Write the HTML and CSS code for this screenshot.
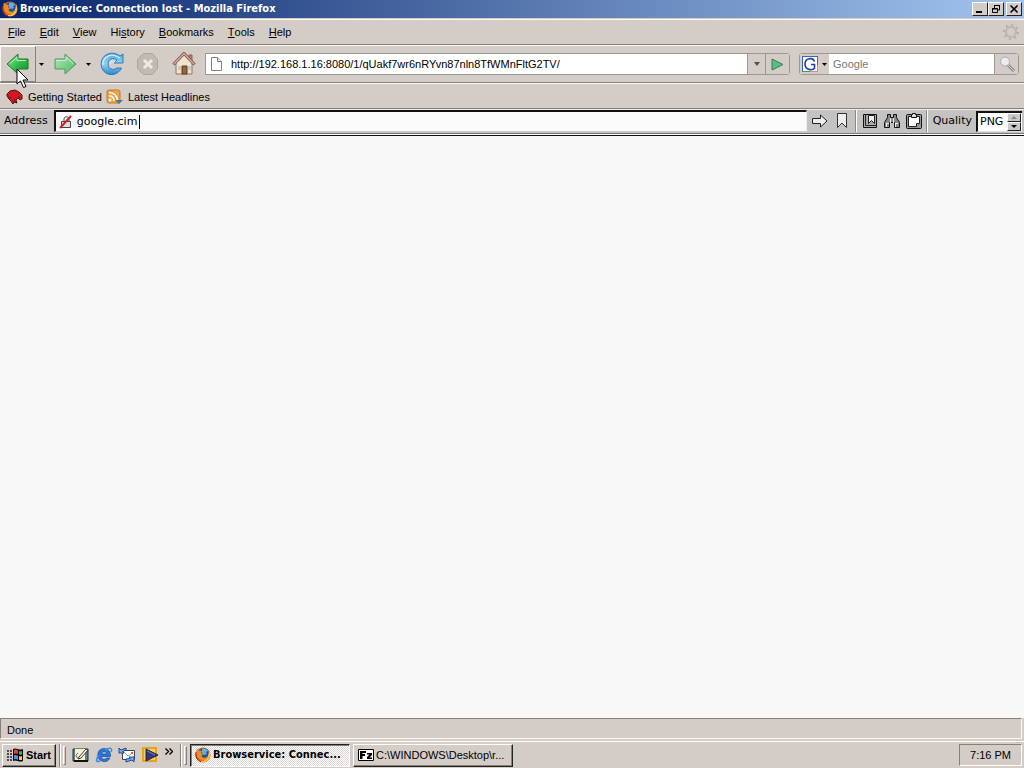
FILE: index.html
```html
<!DOCTYPE html>
<html lang="en">
<head>
<meta charset="utf-8">
<title>Browservice: Connection lost - Mozilla Firefox</title>
<link rel="stylesheet" href="styles.css">
</head>
<body>
<svg class="defs" width="0" height="0" aria-hidden="true">
  <defs>
    <linearGradient id="green" x1="0" y1="0" x2="1" y2="1"><stop offset="0" stop-color="#9be89b"/><stop offset=".55" stop-color="#2fb84a"/><stop offset="1" stop-color="#16932e"/></linearGradient>
    <linearGradient id="pale" x1="0" y1="0" x2="1" y2="1"><stop offset="0" stop-color="#b5e6b4"/><stop offset="1" stop-color="#4dbb68"/></linearGradient>
    <linearGradient id="blue" x1="0" y1="0" x2="0" y2="1"><stop offset="0" stop-color="#5aa5dc"/><stop offset=".5" stop-color="#8fd4f2"/><stop offset="1" stop-color="#2c86c8"/></linearGradient>
    <symbol id="firefox" viewBox="0 0 16 16">
      <circle cx="8" cy="8" r="7.6" fill="#d9601a"/>
      <circle cx="8.6" cy="6.6" r="5.4" fill="#23549b"/>
      <path d="M7 2c3-1 5 0 6 2l-2 1 1 2-3 1-2-2z" fill="#5fb3d8"/>
      <path d="M2 1.500 4 3.500 7 4 6 6.200 8.500 7 6.500 8.800c.8 2.700 4.500 2.500 6 .4C12 12 10 13.500 7 13 2.500 12.500.5 7 2 1.500z" fill="#f08a24"/>
      <path d="M14 3c2 4 1.500 8.500-2 11-3 2-7 1.500-9-1 4 2 8 .5 9.500-3C13.500 7.500 14 5 14 3z" fill="#f7c244"/>
      <path d="M1 5c-.8 4 1 8.500 5 9.800" stroke="#8d2c10" fill="none"/>
    </symbol>
  </defs>
</svg>

<header class="titlebar">
  <svg class="icon16"><use href="#firefox"/></svg>
  <h1>Browservice: Connection lost - Mozilla Firefox</h1>
  <div class="winbuttons">
    <button aria-label="Minimize"><svg width="12" height="10"><path d="M2 8h6" stroke="#000" stroke-width="2"/></svg></button>
    <button aria-label="Restore"><svg width="12" height="10" fill="none" stroke="#000"><path d="M4 1.500h6M4.500 1v3M9.500 1v5H7M2 4.500h5.500v4h-5v-4M2 5h6"/></svg></button>
    <button class="close" aria-label="Close"><svg width="12" height="10"><path d="m2.500 1.500 7 7m0-7-7 7" stroke="#000" stroke-width="1.600"/></svg></button>
  </div>
</header>

<nav class="menubar" aria-label="Menu">
  <button><u>F</u>ile</button><button><u>E</u>dit</button><button><u>V</u>iew</button><button>Hi<u>s</u>tory</button><button><u>B</u>ookmarks</button><button><u>T</u>ools</button><button><u>H</u>elp</button>
  <svg class="throbber" width="16" height="16"><circle cx="8" cy="8" r="5" fill="none" stroke="#bcb6b0" stroke-width="2"/><circle cx="8" cy="8" r="7" fill="none" stroke="#b4aea8" stroke-width="2" stroke-dasharray="2 3.500"/></svg>
</nav>

<div class="navbar">
  <button class="back" aria-label="Back"><svg width="24" height="24"><path d="M1 12 12 2v5h10v10H12v5z" fill="url(#green)" stroke="#197a2c"/><path d="m4 11.500 7-6V8.500h9" fill="none" stroke="#b9f2b5"/></svg>
    <svg class="pointer" width="13" height="21" aria-hidden="true"><path d="M1 1v15l3.500-3 3 6.500 2.500-1-3-6.500h5z" fill="#fff" stroke="#000"/></svg></button>
  <button class="drop" aria-label="Back history"><svg width="5" height="3"><path d="M0 0h5L2.500 3z"/></svg></button>
  <button class="tool" aria-label="Forward"><svg width="24" height="24"><path d="M23 12 12 2v5H2v10h10v5z" fill="url(#pale)" stroke="#4c9c5c"/><path d="M3 8.500h10V5l7 6.500" fill="none" stroke="#d0f0cd"/></svg></button>
  <button class="drop" aria-label="Forward history"><svg width="5" height="3"><path d="M0 0h5L2.500 3z"/></svg></button>
  <button class="tool" aria-label="Reload"><svg width="24" height="24"><path d="M23 2v9h-9l3-3c-4-3-9-1-9 4 0 5 5 7 9 4h4.500C18 23 11 24 6 21-1 17 0 6 6 3c5-3 10-2 14 1z" fill="url(#blue)" stroke="#2a79bd"/><path d="M3 13C2 7 9 1 16 4l4 2M10 12c0-2 3-3 5-2" fill="none" stroke="#cceefa" stroke-width="1.300"/></svg></button>
  <button class="tool" aria-label="Stop" disabled><svg width="24" height="24"><path d="M7.500 1.500h9l5 6v9l-5 6h-9l-6-6v-9z" fill="#bcbcb1" stroke="#a8a89e"/><path d="m8 8 8 8m0-8-8 8" stroke="#eeeae3" stroke-width="3"/></svg></button>
  <button class="tool" aria-label="Home"><svg width="24" height="24"><path d="M4 11v11h16V11l-8-8z" fill="#f0e3cd" stroke="#8d7660"/><path d="M17 3h3v6l-3-2z" fill="#bb8575" stroke="#765"/><path d="m1.500 12.500 10.500-11 10.500 11" fill="none" stroke="#7c5348" stroke-width="3"/><path d="m2 12 10-10.500L22 12" fill="none" stroke="#d6aca0" stroke-width="1.500"/><path d="M10 14h5v8h-5z" fill="#9c6239" stroke="#623b28"/><path d="M6 14h3v4H6zM16 14h3v4h-3z" fill="#c7ccc6"/></svg></button>
  <div class="urlbox">
    <svg width="12" height="14"><path d="M1.500.5h6l4 4v9h-10z" fill="#fff" stroke="#7a828e"/><path d="M7.500.5v4h4" fill="#dde3ee" stroke="#7a828e"/></svg>
    <input type="text" aria-label="Location" value="http://192.168.1.16:8080/1/qUakf7wr6nRYvn87nln8TfWMnFltG2TV/">
    <button class="seg" aria-label="Show history"><svg width="6" height="4"><path d="M0 0h6L3 4z" fill="#554f4a"/></svg></button>
    <button class="seg go" aria-label="Go"><svg width="13" height="13"><path d="M1 1v11l11-5.500z" fill="#62b985" stroke="#2d8054"/></svg></button>
  </div>
  <div class="searchbox">
    <button class="engine" aria-label="Search engine"><svg width="16" height="16"><path d="M0 0h16v16H0z" fill="#fff"/><path d="M0 16V0h16" fill="none" stroke="#3963bd" stroke-width="2"/><path d="M16 0v9" stroke="#d33" stroke-width="2"/><path d="M16 9v7H8" fill="none" stroke="#d98c84" stroke-width="2"/><path d="M0 16h8" stroke="#3b9c54" stroke-width="2"/><path d="M12.500 5.500C11 1 3 2 3 8s7.500 7 9.500 4V8.500H9" fill="none" stroke="#1c3faa" stroke-width="1.600"/></svg><svg width="5" height="3"><path d="M0 0h5L2.500 3z"/></svg></button>
    <input type="text" aria-label="Search" placeholder="Google">
    <button class="seg search" aria-label="Search"><svg width="18" height="16"><path d="m10 9 6 6" stroke="#858585" stroke-width="3"/><path d="m10 9 6 6" stroke="#ddd"/><circle cx="7" cy="5.500" r="4.500" fill="#e9edf0" stroke="#aaa"/></svg></button>
  </div>
</div>

<nav class="bookmarks" aria-label="Bookmarks">
  <a href="#"><svg width="17" height="16"><path d="M1 5 4 2l5-1 4 2 3 3v4l-2 1-2-2-2 2 1 3-3-1-1 2-2-3-2-2-2-3z" fill="#d31822" stroke="#5a1010"/><path d="m12 7 2 2M2 8l3 1m3 1 1 3" fill="none" stroke="#721018"/></svg>Getting Started</a>
  <a href="#"><svg width="17" height="16"><rect x="1" y="1" width="13" height="13" rx="2" fill="#eda247" stroke="#c87b20"/><circle cx="4" cy="11" r="1.500" fill="#fff"/><path d="M3 7c3 0 5 2 5 5M3 3.500c5 0 8.500 3.500 8.500 8.500" fill="none" stroke="#fff" stroke-width="1.600"/><path d="M9 11h8l-4 4z" fill="#5b7388"/></svg>Latest Headlines</a>
</nav>

<main class="page">
  <div class="addressbar">
    <label for="addr">Address</label>
    <div class="field">
      <svg width="14" height="14"><path d="M2.500 6.500h9v6h-9z" fill="#ddd" stroke="#444"/><path d="M5 6V4c0-3 5-3 5 0v2" fill="none" stroke="#444"/><path d="M1 13 12 1" stroke="#c8202c" stroke-width="2"/></svg>
      <span class="typed"><input id="addr" type="text" value="google.cim" size="10"><i class="caret"></i></span>
    </div>
    <div class="group first">
      <button aria-label="Go"><svg width="16" height="14"><path d="M.5 4.500h8V1l6.500 6-6.500 6V9.500h-8z" fill="#eee" stroke="#222"/></svg></button>
      <button aria-label="Bookmark"><svg width="12" height="16"><path d="M1.500.5h9v14L6 10l-4.500 4.500z" fill="#eee" stroke="#333"/></svg></button>
    </div>
    <div class="group">
      <button aria-label="Bookmarks"><svg width="16" height="16"><path d="M1.500 1.500h13v13h-13z" fill="#aaa" stroke="#111"/><path d="M3.500 2v10.500H14" fill="none" stroke="#222"/><path d="M6.500 2.500h6v8l-3-3-3 3z" fill="#eee" stroke="#222"/></svg></button>
      <button aria-label="Find"><svg width="16" height="16"><path d="M3.500 1.500h3v3h3v-3h3v3l3 5v5h-5v-5h-5v5h-5v-5l3-5z" fill="#888" stroke="#111"/><path d="M6.500 5v5m3-5v5M2 10.500h3m6 0h3M2.500 11v3m9-3v3" stroke="#eee"/></svg></button>
      <button aria-label="Clipboard"><svg width="16" height="16"><rect x=".5" y="1.500" width="15" height="14" rx="1" fill="#999" stroke="#111"/><path d="M2.500 3.500h11v7l-3 3h-8z" fill="#fff" stroke="#222"/><path d="M13.500 10.500h-3v3" fill="#ccc" stroke="#222"/><path d="M5.500 1.500h1v-1h3v1h1v3h-5z" fill="#ddd" stroke="#111"/></svg></button>
    </div>
    <div class="group quality">
      <label for="quality">Quality</label>
      <div class="spinner"><input id="quality" type="text" value="PNG"><span><button aria-label="Previous"><svg width="6" height="3"><path d="M0 3h6L3 0z" fill="#888"/></svg></button><button aria-label="Next"><svg width="6" height="3"><path d="M0 0h6L3 3z"/></svg></button></span></div>
    </div>
  </div>
</main>

<div class="status" role="status">Done</div>

<footer class="taskbar">
  <button class="start"><svg width="17" height="16"><path d="M0 4h2m1 0h2M0 7h2m1 0h2M0 10h2m1 0h2M0 13h2m1 0h2" stroke="#222" stroke-width="1.500"/><path d="M6 2c3-2 6 2 10 0v12c-4 2-7-2-10 0z"/><path d="M7 3c1.500-1 3 0 4 .5V7C9.500 6.500 8 6 7 7z" fill="#e83c36"/><path d="M12 4c1 .3 2 .3 3 0v3.500c-1 .5-2 .3-3 0z" fill="#37b64a"/><path d="M7 8.500c1-1 3 0 4 .3v4C10 12 8 12 7 12.500z" fill="#5d86ea"/><path d="M12 9.300c1 .2 2 .3 3-.3v3.700c-1 .5-2 .3-3 0z" fill="#efd33c"/></svg>Start</button>
  <i class="sep"></i><i class="grip"></i>
  <div class="quick">
    <button aria-label="Show Desktop"><svg width="18" height="16"><path d="M1 2h15v12H1z" fill="#57848c" stroke="#234"/><path d="M3 2h10v11H3z" fill="#f5f1c8"/><path d="M2 14h14" stroke="#111" stroke-width="2"/><path d="m7 10 7-8 2 1-7 8-3 1z" fill="#fff" stroke="#333"/><path d="M6 6c-3 2-2 5 1 5" fill="none" stroke="#555"/></svg></button>
    <button aria-label="Internet Explorer"><svg width="18" height="16"><path d="M9 1.500a6.500 6.500 0 1 0 6 9.500h-3.500c-1.500 2-5 1.500-5-1.500h9C16 5 13 1.500 9 1.500zM6.500 7c.5-3 5-3 5 0z" fill="#2c74d8" fill-rule="evenodd" stroke="#164ca5" stroke-width=".7"/><path d="M4 8c-3 4-4 8 1 6M10 3c5-3 8-2 6 2" fill="none" stroke="#3c8aee" stroke-width="1.500"/></svg></button>
    <button aria-label="Outlook Express"><svg width="18" height="16"><path d="M4.500 3.500h12v9h-12z" fill="#fff" stroke="#444"/><path d="M13 5h2v2h-2z" fill="#d55"/><path d="m5 4 5 5 3-2" fill="none" stroke="#999"/><path d="M1 1v5h5L4.500 4.500 8 3V1L3 3zM16 15v-5h-5l1.500 1.500L8 12v3l6-2z" fill="#6dbaf2" stroke="#1d4791"/></svg></button>
    <button aria-label="Media Player"><svg width="18" height="16"><path d="M2 1h13v13H2z" fill="#f8d268" stroke="#e9a21c" stroke-width="2"/><path d="M5 2v12l12-6z" fill="#31397c" stroke="#1b2257"/><path d="m6 4 8 4" stroke="#7c83bb"/></svg></button>
    <button class="more" aria-label="More"><svg width="8" height="7" fill="none" stroke="#000" stroke-width="1.400"><path d="m.5.500 3 3-3 3m4-6 3 3-3 3"/></svg></button>
  </div>
  <i class="sep"></i><i class="grip"></i>
  <button class="task active"><svg class="icon16"><use href="#firefox"/></svg><span>Browservice: Connec...</span></button>
  <button class="task"><svg width="16" height="12"><path d="M.5.500h15v11H.5z" fill="#fff" stroke="#000"/><path d="M2 2h6v2H4.500v1H7v2H4.500v3H2zM9 4h5v2l-2.500 2.500H14V10H9V8l2.500-2.500H9z"/></svg><span>C:\WINDOWS\Desktop\r...</span></button>
  <time class="clock">7:16 PM</time>
</footer>
</body>
</html>
```
FILE: styles.css
```css
:root {
  --face: #d4ccc6;
  --shade: #858079;
  --light: #fbf8f5;
}
* { box-sizing: border-box; }
body {
  margin: 0;
  min-height: 100vh;
  display: flex;
  flex-direction: column;
  background: var(--face);
  color: #000;
  font: 11px/14px "Liberation Sans", Arial, sans-serif;
}
button, input { font: inherit; color: inherit; margin: 0; padding: 0; border: 0; background: none; border-radius: 0; }
button { display: flex; align-items: center; justify-content: center; flex: none; }
input { min-width: 0; outline: 0; }
svg { display: block; flex: none; }
.defs { position: absolute; }
.icon16 { width: 16px; height: 16px; }

.titlebar {
  display: flex;
  align-items: center;
  height: 18px;
  padding: 0 2px;
  background: linear-gradient(to right, #08256b, #a2c5ef);
  color: #fff;
}
.titlebar h1 { flex: 1; margin: 0 0 0 2px; font: bold 11px/16px "DejaVu Sans Condensed", "DejaVu Sans", sans-serif; }
.winbuttons { display: flex; }
.winbuttons button {
  width: 16px;
  height: 14px;
  background: var(--face);
  border: 1px solid;
  border-color: #fff #222 #222 #fff;
}
.winbuttons .close { margin-left: 2px; }

.menubar {
  display: flex;
  align-items: center;
  height: 26px;
  margin-top: 1px;
  padding-left: 1px;
  border-top: 1px solid var(--light);
  border-bottom: 1px solid var(--shade);
}
.menubar button { padding: 0 7px; }
.throbber { margin: 0 5px 0 auto; }

.navbar {
  display: flex;
  align-items: center;
  height: 38px;
  border-top: 1px solid var(--light);
  border-bottom: 1px solid var(--shade);
}
.back { position: relative; width: 36px; height: 36px; border: 1px solid; border-color: var(--light) var(--shade) var(--shade) var(--light); }
.pointer { position: absolute; left: 15px; top: 21px; z-index: 2; }
.drop { width: 11px; height: 30px; }
.tool { width: 36px; height: 36px; }
.urlbox, .searchbox {
  display: flex;
  align-items: center;
  height: 22px;
  background: #fff;
  border: 1px solid #9c9791;
}
.urlbox { flex: 1; margin-left: 3px; border-radius: 0 3px 3px 0; }
.urlbox > svg { margin: 0 9px 0 4px; }
.urlbox input { flex: 1; }
.seg { align-self: stretch; width: 18px; background: var(--face); border-left: 1px solid #9c9791; }
.seg.go, .seg.search { width: 24px; }
.searchbox { width: 220px; margin: 0 5px 0 9px; border-radius: 3px; }
.searchbox input { flex: 1; padding-left: 4px; }
.searchbox input::placeholder { color: #777; opacity: 1; }
.engine { gap: 4px; width: 29px; align-self: stretch; background: var(--face); }

.bookmarks {
  display: flex;
  align-items: center;
  gap: 4px;
  height: 26px;
  padding: 1px 0 0 6px;
  border-top: 1px solid var(--light);
  border-bottom: 1px solid var(--shade);
}
.bookmarks a { display: flex; align-items: center; gap: 5px; color: inherit; text-decoration: none; }

.page { flex: 1; background: #f8f8f8; }
.addressbar {
  display: flex;
  align-items: center;
  height: 27px;
  padding: 0 0 3px;
  background: #c4c3c2;
  border-top: 1px solid #eee;
  border-bottom: 1px solid #111;
  box-shadow: inset 0 -1px #fff, inset 0 -2px #777;
  font: 11px/14px "DejaVu Sans", sans-serif;
}
.addressbar > label { padding: 0 6px 0 4px; }
.field { flex: 1; display: flex; align-items: center; gap: 4px; height: 22px; padding-left: 3px; background: #fafafa; border: 1px solid; border-color: #111 #eee #ccc #111; border-width: 2px 1px 1px 2px; }
.typed { display: flex; align-items: center; }
.typed input { width: 62px; }
.caret { width: 1px; height: 14px; background: #000; }
.group { display: flex; align-items: center; height: 22px; padding: 0 5px; gap: 6px; border-left: 1px solid #fff; box-shadow: -1px 0 #888; }
.group.first { padding: 0 8px 0 5px; gap: 8px; border-left: 0; box-shadow: none; }
.quality { padding-right: 2px; gap: 4px; }
.spinner { display: flex; width: 46px; height: 21px; padding: 0 1px 0 2px; background: #fff; border: 2px solid #111; border-right: 0; border-bottom: 1px solid #ddd; }
.spinner input { flex: 1; width: 20px; }
.spinner span { display: flex; flex-direction: column; }
.spinner button { flex: 1; width: 14px; background: #c8c8c8; border: 1px solid; border-color: #fff #222 #222 #fff; }

.status {
  height: 21px;
  margin: 0 2px 2px 0;
  padding: 4px 6px 0;
  border: 1px solid;
  border-color: var(--shade) var(--light) var(--light) var(--shade);
}
.taskbar { display: flex; align-items: center; height: 27px; padding: 0 2px; border-top: 1px solid #fff; }
.start, .task { height: 23px; border: 1px solid; border-color: #fff #222 #222 #fff; box-shadow: inset -1px -1px var(--shade); }
.start { width: 54px; gap: 2px; font-weight: bold; }
.sep { width: 1px; height: 23px; margin: 0 1px 0 3px; background: var(--shade); box-shadow: 1px 0 #fff; }
.grip { width: 3px; height: 19px; margin: 0 3px 0 2px; border: 1px solid; border-color: #fff var(--shade) var(--shade) #fff; }
.quick { display: flex; align-items: center; }
.quick button { width: 23px; height: 22px; }
.quick .more { width: 16px; align-items: flex-start; padding-top: 4px; }
.task { width: 160px; padding: 0 4px; gap: 2px; justify-content: flex-start; margin-right: 3px; white-space: nowrap; }
.task.active {
  font: bold 11px/14px "DejaVu Sans Condensed", "DejaVu Sans", sans-serif;
  background: repeating-conic-gradient(#fff 0 25%, #ddd7d3 0 50%) 0 0 / 2px 2px;
  border-color: #222 #fff #fff #222;
  box-shadow: inset 1px 1px var(--shade);
}
.clock { margin-left: auto; padding: 3px 10px; height: 22px; border: 1px solid; border-color: var(--shade) #fff #fff var(--shade); }
```
